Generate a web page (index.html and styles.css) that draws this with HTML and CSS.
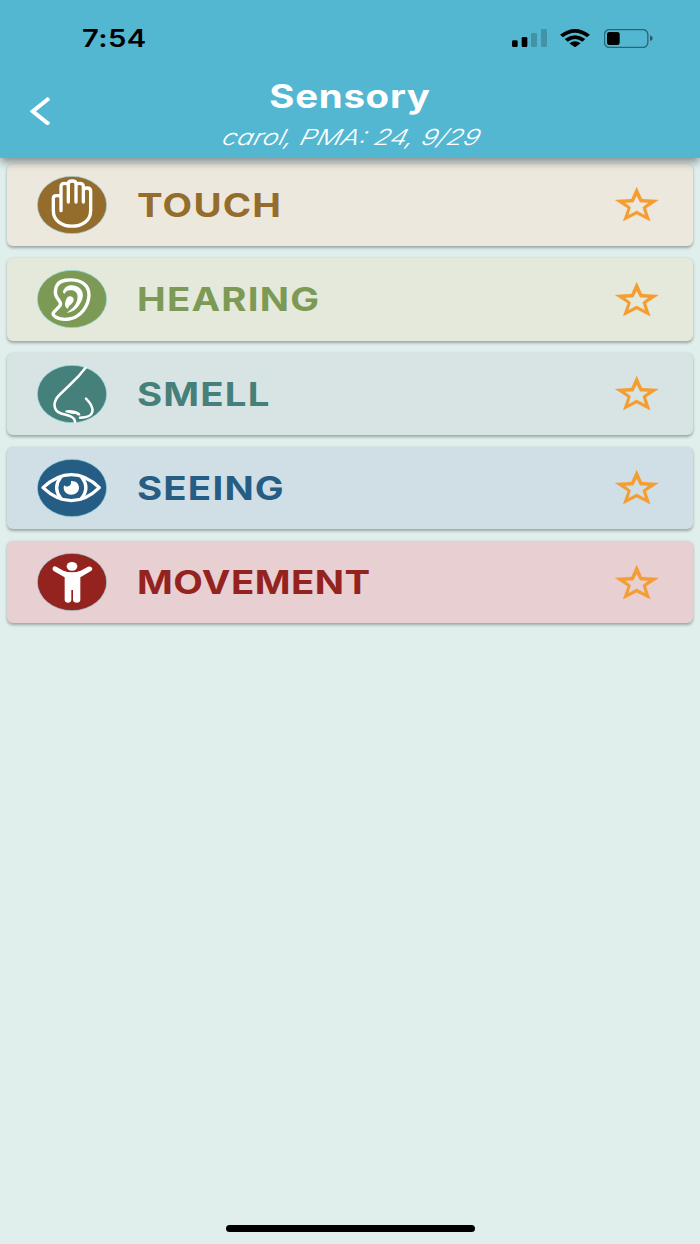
FILE: index.html
```
<!DOCTYPE html>
<html lang="en">

<head>
    <meta charset="UTF-8">
    <meta name="viewport" content="width=device-width, initial-scale=1.0">
    <title>Sensory</title>
    <link rel="stylesheet" href="styles.css">
</head>

<body>
    <svg class="defs" width="0" height="0">
        <symbol id="star" viewBox="0 0 131 103">
            <path fill-rule="evenodd" d="M65 0L81 36L131 39L93 64L106 103L65 82L24 103L38 64L0 39L49 36ZM65 26L55 46L30 47L47 61L40 85L65 71L90 85L83 61L100 47L75 46Z"/>
        </symbol>
    </svg>

    <header>
        <div class="status">
            <span class="time">7:54</span>
            <div class="status-icons">
                <svg class="signal" viewBox="0 0 105 55">
                    <rect x="0" y="34" width="17" height="20" rx="4"/>
                    <rect x="29" y="24" width="17" height="30" rx="4"/>
                    <rect class="dim" x="57" y="12" width="18" height="42" rx="4"/>
                    <rect class="dim" x="87" y="0" width="18" height="54" rx="4"/>
                </svg>
                <svg class="wifi" viewBox="0 0 90 55">
                    <path d="M0 17Q45 -17 90 17L81 25Q45 -3 9 25Z"/>
                    <path d="M14 30Q45 8 76 30L67 38Q45 22 23 38Z"/>
                    <path d="M28 43Q45 31 62 43L45 55Z"/>
                </svg>
                <svg class="battery" viewBox="0 0 147 57">
                    <rect class="case" x="1.5" y="1.5" width="130" height="54" rx="15"/>
                    <rect x="9" y="9" width="38" height="39" rx="7"/>
                    <path class="nub" d="M138 19Q146 22 146 28Q146 34 138 37Z"/>
                </svg>
            </div>
        </div>
        <div class="bar">
            <a class="back" href="#" aria-label="Back">
                <svg viewBox="0 0 60 86"><path d="M57 4L8 43L57 82"/></svg>
            </a>
            <div class="titles">
                <h1>Sensory</h1>
                <p>carol, PMA: 24, 9/29</p>
            </div>
        </div>
    </header>

    <main class="list">
        <a class="item touch" href="#">
            <svg class="icon" viewBox="0 0 210 174">
                <ellipse class="disc" cx="105" cy="87" rx="104" ry="86"/>
                <path class="line" d="M72 104V65Q72 59 64 59H58Q49 59 49 67V104C49 166 161 166 161 104V46Q161 36 150 36Q139 36 139 44V78V31Q139 22 128 22Q117 22 117 29V78V23Q117 15 105.500 15Q94 15 94 23V78V31Q94 22 83 22Q72 22 72 31V104"/>
            </svg>
            <span class="name">TOUCH</span>
            <svg class="star"><use href="#star"/></svg>
        </a>
        <a class="item hearing" href="#">
            <svg class="icon" viewBox="0 0 210 174">
                <ellipse class="disc" cx="105" cy="87" rx="104" ry="86"/>
                <path class="line" d="M50 127L67 109Q73 103 69 96L59 81Q53 72 56 59C58 43 67 31 93 30C132 27 156 45 156 76C154 108 132 141 96 147Q71 151 53 139Q45 132 50 127Z"/>
                <path class="fill" d="M78 64C85 44 108 41 125 52C143 64 140 88 127 104C118 118 105 127 89 128C106 117 118 105 121 88C124 71 117 63 105 61C94 59 87 62 83 71Q77 71 78 64Z"/>
                <path class="fill" d="M99 79C113 80 113 94 103 102Q93 108 92 117Q81 109 85 96C88 86 91 79 99 79Z"/>
            </svg>
            <span class="name">HEARING</span>
            <svg class="star"><use href="#star"/></svg>
        </a>
        <a class="item smell" href="#">
            <svg class="icon" viewBox="0 0 210 174">
                <ellipse class="disc" cx="105" cy="87" rx="104" ry="86"/>
                <path class="line thin" d="M145 9Q128 32 101 57L67 90C47 110 48 135 69 144C86 151 114 152 114 171"/>
                <path class="line thin" d="M147 101C176 130 175 158 129 158"/>
                <path class="fill" d="M84 138Q92 132 114 137Q132 142 130 151Q122 153 117 147Q105 148 96 144Q84 143 84 138Z"/>
            </svg>
            <span class="name">SMELL</span>
            <svg class="star"><use href="#star"/></svg>
        </a>
        <a class="item seeing" href="#">
            <svg class="icon" viewBox="0 0 210 174">
                <ellipse class="disc" cx="105" cy="87" rx="104" ry="86"/>
                <path class="line" d="M18 86Q59 47 103 47Q147 47 187 86Q147 125 103 125Q59 125 18 86Z"/>
                <path class="line" d="M72 53Q46 86 72 119M133 53Q160 86 133 119"/>
                <path class="fill" d="M102 66C117 65 126 74 126 86C126 98 116 107 103 107C90 107 80 98 80 86L81 79Q86 84 94 82Q104 78 102 66Z"/>
            </svg>
            <span class="name">SEEING</span>
            <svg class="star"><use href="#star"/></svg>
        </a>
        <a class="item movement" href="#">
            <svg class="icon" viewBox="0 0 210 174">
                <ellipse class="disc" cx="105" cy="87" rx="104" ry="86"/>
                <ellipse class="fill" cx="105" cy="40" rx="16" ry="13"/>
                <path class="fill" d="M58 41L79 53Q105 63 131 53L153 41Q164 39 166 47Q166 51 162 54L130 73V141Q129 149 119 149Q109 149 108 141V111H103V141Q102 149 93 149Q84 149 83 141V73L50 54Q45 50 47 44Q51 38 58 41Z"/>
            </svg>
            <span class="name">MOVEMENT</span>
            <svg class="star"><use href="#star"/></svg>
        </a>
    </main>

    <footer><div class="home"></div></footer>
</body>

</html>
```

FILE: styles.css
```
html,
body {
    margin: 0;
    padding: 0;
    height: 100%;
}

body {
    display: flex;
    flex-direction: column;
    background: #e0eeec;
    font-family: Inter, "Liberation Sans", sans-serif;
    overflow: hidden;
}

a {
    color: inherit;
    text-decoration: none;
}

.defs {
    display: none;
}

header {
    position: relative;
    height: 157.7px;
    flex: none;
    background: #54b7d1;
    color: #fff;
    box-shadow: 0 4px 8px -1px rgba(0, 0, 0, .3), 0 5px 9px rgba(0, 0, 0, .16);
}

.status {
    display: flex;
    justify-content: space-between;
    align-items: center;
    height: 76px;
    padding: 0 47.5px 0 82px;
    box-sizing: border-box;
    color: #000;
}

.time {
    padding-top: 1px;
    font-size: 24px;
    font-weight: 600;
    letter-spacing: .3px;
    transform: scaleX(1.22);
    transform-origin: left;
}

.status-icons {
    display: flex;
    align-items: center;
}

.signal {
    width: 35px;
    height: 18.3px;
    margin-right: 13.3px;
}

.wifi {
    width: 30px;
    height: 18.3px;
    margin-right: 13.4px;
}

.battery {
    width: 49px;
    height: 19px;
}

.dim {
    opacity: .2;
}

.case {
    fill: none;
    stroke: #000;
    stroke-width: 4;
    opacity: .45;
}

.nub {
    opacity: .5;
}

.bar {
    display: grid;
    grid-template-columns: 80px 1fr 80px;
    height: 81px;
}

.back {
    padding: 20.5px 0 0 29.5px;
}

.back svg {
    width: 20px;
    height: 28.7px;
    fill: none;
    stroke: #fff;
    stroke-width: 12;
}

.titles {
    text-align: center;
}

h1 {
    margin: 0;
    padding-top: 1px;
    font-size: 32px;
    line-height: 40px;
    font-weight: 700;
    letter-spacing: .6px;
    transform: scaleX(1.2);
}

p {
    margin: 7px 0 0;
    padding-left: 3px;
    font-size: 22px;
    line-height: 26px;
    font-style: italic;
    font-weight: 300;
    transform: scaleX(1.22) skewX(-14deg);
}

.list {
    display: flex;
    flex-direction: column;
    gap: 12px;
    flex: 1;
    padding: 6.3px 7.3px 0;
}

.item {
    display: flex;
    align-items: center;
    height: 82.3px;
    padding: 0 34px 0 29.7px;
    box-sizing: border-box;
    border-radius: 6px;
    box-shadow: 0 1.5px 3px rgba(0, 0, 0, .3);
}

.icon {
    width: 70px;
    height: 58px;
}

.disc {
    fill: currentColor;
    stroke: #9fdde6;
    stroke-width: 2;
}

.line {
    fill: none;
    stroke: #fff;
    stroke-width: 10;
    stroke-linejoin: round;
    stroke-linecap: round;
}

.thin {
    stroke-width: 7.500;
}

.fill {
    fill: #fff;
}

.name {
    margin-left: 30.5px;
    padding-top: 1px;
    font-size: 32px;
    font-weight: 700;
    letter-spacing: 1px;
    transform: scaleX(1.2);
    transform-origin: left;
}

.star {
    width: 43.7px;
    height: 34.3px;
    margin: -1px 0 0 auto;
    fill: #f59d30;
    stroke: #f59d30;
    stroke-width: .5;
    overflow: visible;
}

.touch {
    background: #ede8de;
    color: #946d2c;
}

.hearing {
    background: #e5e9dc;
    color: #7c9a55;
}

.smell {
    background: #d8e4e4;
    color: #45807b;
}

.seeing {
    background: #d0dee5;
    color: #255d84;
}

.movement {
    background: #e7cfd2;
    color: #94231f;
}

.movement .name {
    letter-spacing: .4px;
}

footer {
    display: flex;
    justify-content: center;
    padding-bottom: 12px;
}

.home {
    width: 249px;
    height: 7.500px;
    border-radius: 4px;
    background: #000;
}
```
